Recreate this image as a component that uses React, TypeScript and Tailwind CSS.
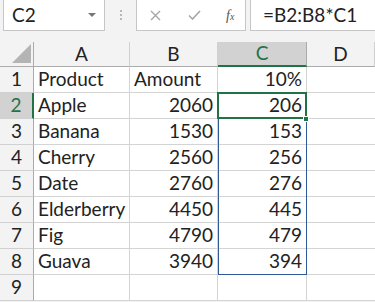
import { Fragment } from "react";

const rows: [string, string, string][] = [
  ["Product", "Amount", "10%"],
  ["Apple", "2060", "206"],
  ["Banana", "1530", "153"],
  ["Cherry", "2560", "256"],
  ["Date", "2760", "276"],
  ["Elderberry", "4450", "445"],
  ["Fig", "4790", "479"],
  ["Guava", "3940", "394"],
  ["", "", ""],
];

const cols = ["A", "B", "C", "D"];

export default function App() {
  return (
    <div
      className="w-[375px] h-[302px] overflow-hidden bg-[#f3f3f3] text-[#222]"
      style={{ fontFamily: "Lato, 'Liberation Sans', sans-serif" }}
    >
      {/* formula bar */}
      <div className="flex h-[43px] items-start -mt-px">
        <div className="ml-[3px] w-[102px] h-[32px] bg-white border border-[#c6c6c6] flex items-center justify-between pl-[8px] pr-[8px]">
          <span className="text-[19px]">C2</span>
          <span className="w-0 h-0 border-l-[4px] border-r-[4px] border-t-[4px] border-l-transparent border-r-transparent border-t-[#777]" />
        </div>
        <div className="w-[31px] h-[32px] flex flex-col items-center justify-center gap-[2px]">
          <span className="w-[2px] h-[2px] bg-[#b8b8b8]" />
          <span className="w-[2px] h-[2px] bg-[#b8b8b8]" />
          <span className="w-[2px] h-[2px] bg-[#b8b8b8]" />
        </div>
        <div className="w-[110px] h-[32px] bg-white border border-[#c6c6c6] flex items-center">
          <svg className="ml-[13px]" width="11" height="11" viewBox="0 0 11 11">
            <path d="M1 1L10 10M10 1L1 10" stroke="#a6a6a6" strokeWidth="1.4" fill="none" />
          </svg>
          <svg className="ml-[27px]" width="13" height="10" viewBox="0 0 13 10">
            <path d="M1 5.5L4.5 9L12 1" stroke="#a6a6a6" strokeWidth="1.6" fill="none" />
          </svg>
          <span
            className="ml-[25px] text-[14px] italic text-[#555]"
            style={{ fontFamily: "'Liberation Serif', serif" }}
          >
            f<span className="text-[10px]">x</span>
          </span>
        </div>
        <div className="ml-[4px] flex-1 h-[32px] bg-white border border-[#c6c6c6] border-r-0 flex items-center pl-[12px]">
          <span className="text-[19px]">=B2:B8*C1</span>
        </div>
      </div>

      {/* sheet */}
      <div className="grid grid-cols-[34px_96px_88px_89px_1fr] grid-rows-[25px_repeat(9,26px)] text-[19px] relative">
        <div className="bg-[#f3f3f3] border-r border-b border-[#ababab] relative">
          <svg className="absolute right-[2px] bottom-[3px]" width="19" height="19" viewBox="0 0 19 19">
            <path d="M19 0V19H0Z" fill="#b4b4b4" />
          </svg>
        </div>
        {cols.map((c) => (
          <div
            key={c}
            className={
              c === "C"
                ? "bg-[#d2d2d2] border-r border-[#ababab] border-b-2 border-b-[#217346] text-[#217346] flex items-center justify-center"
                : "bg-[#f3f3f3] border-r border-b border-[#d0d0d0] border-b-[#ababab] flex items-center justify-center"
            }
          >
            {c}
          </div>
        ))}
        {rows.map((r, i) => (
          <Fragment key={i}>
            <div
              className={
                i === 1
                  ? "bg-[#d2d2d2] border-r-2 border-r-[#217346] border-b border-b-[#d0d0d0] text-[#217346] flex items-center justify-center"
                  : "bg-[#f3f3f3] border-r border-r-[#ababab] border-b border-b-[#d0d0d0] flex items-center justify-center"
              }
            >
              {i + 1}
            </div>
            <div className="bg-white border-r border-b border-[#d4d4d4] flex items-center pl-[4px] whitespace-nowrap">
              {r[0]}
            </div>
            <div
              className={
                i === 0
                  ? "bg-white border-r border-b border-[#d4d4d4] flex items-center pl-[4px] whitespace-nowrap"
                  : "bg-white border-r border-b border-[#d4d4d4] flex items-center justify-end pr-[4px] whitespace-nowrap"
              }
            >
              {r[1]}
            </div>
            <div className="bg-white border-r border-b border-[#d4d4d4] flex items-center justify-end pr-[4px]">
              {r[2]}
            </div>
            <div className="bg-white border-b border-[#d4d4d4]" />
          </Fragment>
        ))}
        {/* range outline C2:C8 */}
        <div className="absolute left-[218px] top-[50px] w-[89px] h-[183px] border border-[#2f5a96] pointer-events-none" />
        {/* active cell C2 */}
        <div className="absolute left-[217px] top-[50px] w-[90px] h-[27px] border-2 border-[#217346] pointer-events-none" />
        <div className="absolute left-[303px] top-[74px] w-[6px] h-[6px] bg-[#217346] border border-white pointer-events-none" />
      </div>
    </div>
  );
}
